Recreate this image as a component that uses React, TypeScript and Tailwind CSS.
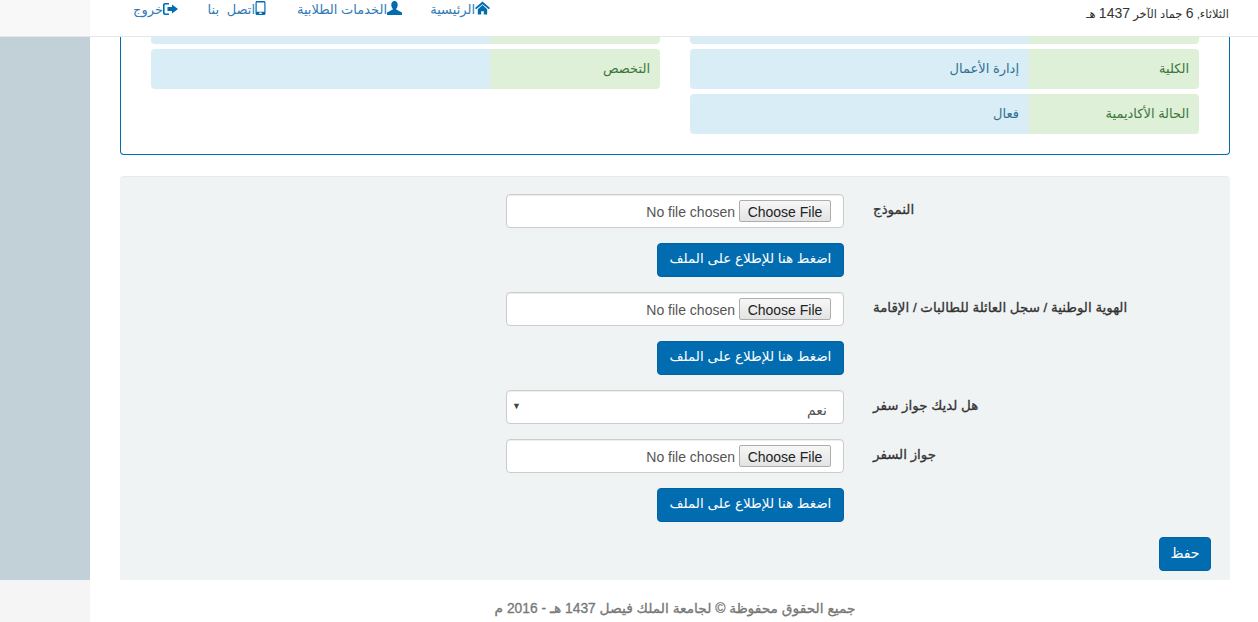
const nav = [
  { label: 'الرئيسية', icon: 'home', width: 'w-[58px]' },
  { label: 'الخدمات الطلابية', icon: 'user', width: 'w-[106px]' },
  { label: 'اتصل بنا', icon: 'phone', width: 'w-[58px] [word-spacing:4px]' },
  { label: 'خروج', icon: 'logout', width: 'w-[43px]' },
];

function NavIcon({ name }: { name: string }) {
  if (name === 'home') {
    return (
      <svg viewBox="0 0 16 14" className="h-[14px] w-[15px] shrink-0 fill-[#026cb1]">
        <path d="M8 0 L16 7 L14.8 8.4 L8 3 L1.2 8.4 L0 7 Z M3 8.2 L8 3.9 L13 8.2 V14 H9.4 V10.5 H6.6 V14 H3 Z" />
      </svg>
    );
  }
  if (name === 'user') {
    return (
      <svg viewBox="0 0 15 14" className="h-[14px] w-[15px] shrink-0 fill-[#026cb1]">
        <path d="M7.5 0 C9.7 0 10.7 1.8 10.7 3.8 C10.7 5.8 9.7 7.4 9.1 8 C9.1 9 12.5 9.8 15 11.6 V14 H0 V11.6 C2.5 9.8 5.9 9 5.9 8 C5.3 7.4 4.3 5.8 4.3 3.8 C4.3 1.8 5.3 0 7.5 0 Z" />
      </svg>
    );
  }
  if (name === 'phone') {
    return (
      <svg viewBox="0 0 10 14" className="h-[14px] w-[11px] shrink-0 fill-[#026cb1]">
        <path fillRule="evenodd" d="M1.5 0 H8.5 C9.3 0 10 .7 10 1.5 V12.5 C10 13.3 9.3 14 8.5 14 H1.5 C.7 14 0 13.3 0 12.5 V1.5 C0 .7 .7 0 1.5 0 Z M1.2 1.4 V10.8 H8.8 V1.4 Z M3.8 11.6 V13 H6.2 V11.6 Z" />
      </svg>
    );
  }
  return (
    <svg viewBox="0 0 15 12" className="mt-[2px] h-[12px] w-[15px] shrink-0 fill-[#026cb1]">
      <path d="M2 0 H6 V1.6 H2.4 C1.9 1.6 1.6 1.9 1.6 2.4 V9.6 C1.6 10.1 1.9 10.4 2.4 10.4 H6 V12 H2 C.9 12 0 11.1 0 10 V2 C0 .9 .9 0 2 0 Z M9 1.5 L15 6 L9 10.5 V8 H4.5 V4 H9 Z" />
    </svg>
  );
}

function InfoRow({ label, value }: { label: string; value?: string }) {
  return (
    <div className="flex h-10 overflow-hidden rounded-[4px] text-[13px] leading-10">
      <div className="w-[170px] bg-[#dff0d8] pr-[10px] text-[#3c763d]">{label}</div>
      <div className="flex-1 bg-[#d9edf7] pr-[10px] text-[#31708f]">{value}</div>
    </div>
  );
}

function FieldRow({ label, children }: { label: string; children: React.ReactNode }) {
  return (
    <div className="flex gap-[29px] pr-[102px]">
      <label className="w-[255px] whitespace-nowrap pt-[5px] text-left text-[13.4px] leading-[22px] text-[#333] [-webkit-text-stroke:0.3px_#333]">
        {label}
      </label>
      <div className="w-[338px]">{children}</div>
    </div>
  );
}

function FileField({ label }: { label: string }) {
  return (
    <>
      <FieldRow label={label}>
        <input
          type="file"
          className="block h-[34px] w-full rounded-[4px] border border-[#ccc] bg-white px-3 py-[5px] text-[14px] leading-[22px] text-[#555] shadow-[inset_0_1px_1px_rgba(0,0,0,0.075)] [font-family:'Liberation_Sans',sans-serif] file:me-1 file:h-[22px] file:w-[92px] file:rounded-[2px] file:border file:border-[#adadad] file:bg-linear-to-b file:from-[#f7f7f7] file:to-[#e3e3e3] file:text-[14px] file:text-[#222]"
        />
      </FieldRow>
      <FieldRow label="">
        <button className="block h-[34px] w-[187px] rounded-[4px] border border-[#0263a3] bg-[#026cb1] pb-[3px] text-[13.5px] leading-5 whitespace-nowrap text-white">
          اضغط هنا للإطلاع على الملف
        </button>
      </FieldRow>
    </>
  );
}

export default function App() {
  return (
    <div
      dir="rtl"
      className="flex h-[622px] flex-col overflow-hidden bg-white [font-family:'Liberation_Sans','DejaVu_Sans','Noto_Sans',sans-serif]"
    >
      {/* top bar */}
      <header className="flex h-[37px] shrink-0 justify-between border-b border-[#e7e7e7] bg-white">
        <div className="pr-[29px] pt-[3px] text-[11.5px] leading-5 tracking-[-0.3px] text-[#333]">
          الثلاثاء, <span className="text-[14px] tracking-normal">6</span> جماد الآخر{' '}
          <span className="text-[14px] tracking-normal">1437</span> هـ
        </div>
        <div className="flex">
          <nav className="flex gap-[30px] pl-[45px] pt-px">
            {nav.map((item) => (
              <a key={item.label} className={`flex h-4 items-start text-[13px] leading-[18px] text-[#337ab7] ${item.width}`}>
                <NavIcon name={item.icon} />
                <span className="whitespace-nowrap">{item.label}</span>
              </a>
            ))}
          </nav>
          <div className="w-[90px] bg-[#f8f8f8]" />
        </div>
      </header>

      <div className="flex min-h-0 flex-1">
        <main className="min-w-0 flex-1 pr-[28px] pl-[30px]">
          {/* student info card, scrolled under the top bar */}
          <section className="grid grid-cols-2 gap-x-[30px] rounded-b-[4px] border-x border-b border-[#026cb1] pr-[30px] pl-[30px] pb-[20px]">
            <div className="flex flex-col gap-[5px]">
              <div className="flex h-[7px] overflow-hidden rounded-b-[4px]">
                <div className="w-[170px] bg-[#dff0d8]" />
                <div className="flex-1 bg-[#d9edf7]" />
              </div>
              <InfoRow label="الكلية" value="إدارة الأعمال" />
              <InfoRow label="الحالة الأكاديمية" value="فعال" />
            </div>
            <div className="flex flex-col gap-[5px]">
              <div className="flex h-[7px] overflow-hidden rounded-b-[4px]">
                <div className="w-[170px] bg-[#dff0d8]" />
                <div className="flex-1 bg-[#d9edf7]" />
              </div>
              <InfoRow label="التخصص" />
            </div>
          </section>

          {/* upload form */}
          <section className="mt-[21px] flex h-[404px] flex-col gap-[15px] rounded-t-[4px] border-t border-[#e6eaec] bg-[#eff3f4] pt-[17px]">
            <FileField label="النموذج" />
            <FileField label="الهوية الوطنية / سجل العائلة للطالبات / الإقامة" />
            <FieldRow label="هل لديك جواز سفر">
              <div className="relative">
                <select className="block h-[34px] w-full appearance-none rounded-[4px] border border-[#ccc] bg-white pt-[7px] pr-4 text-[14px] text-[#555] shadow-[inset_0_1px_1px_rgba(0,0,0,0.075)]">
                  <option>نعم</option>
                </select>
                <span className="absolute top-[11px] left-[6px] text-[9px] leading-[10px] text-[#444]">▼</span>
              </div>
            </FieldRow>
            <FileField label="جواز السفر" />
            <div className="pr-[19px]">
              <button className="h-[34px] w-[52px] rounded-[4px] border border-[#0263a3] bg-[#026cb1] pb-px text-[14px] text-white">
                حفظ
              </button>
            </div>
          </section>

          <footer className="pt-[19px] text-center text-[13.8px] leading-5 text-[#777] [-webkit-text-stroke:0.3px_#777]">
            جميع الحقوق محفوظة © لجامعة الملك فيصل 1437 هـ - 2016 م
          </footer>
        </main>

        <aside className="flex w-[90px] shrink-0 flex-col">
          <div className="flex-1 bg-[#c2d0d7]" />
          <div className="h-[42px] bg-[#f5f5f5]" />
        </aside>
      </div>
    </div>
  );
}
